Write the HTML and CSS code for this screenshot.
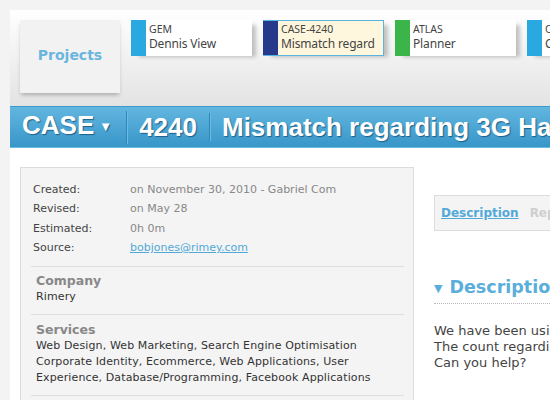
FILE: index.html
```html
<!DOCTYPE html>
<html>
<head>
<meta charset="utf-8">
<link rel="stylesheet" href="styles.css">
</head>
<body>
<div class="page">
  <div class="topbar">
    <div class="projects">Projects</div>
    <div class="tab"><span class="bar b-blue"></span><div class="tab-text"><div class="code">GEM</div><div class="name">Dennis View</div></div></div>
    <div class="tab active"><span class="bar b-navy"></span><div class="tab-text"><div class="code">CASE-4240</div><div class="name">Mismatch regard</div></div></div>
    <div class="tab"><span class="bar b-green"></span><div class="tab-text"><div class="code">ATLAS</div><div class="name">Planner</div></div></div>
    <div class="tab"><span class="bar b-blue"></span><div class="tab-text"><div class="code">CLIENT</div><div class="name">Corporate</div></div></div>
  </div>
  <div class="casebar">
    <span class="seg first">CASE<span class="caret">&#9660;</span></span>
    <span class="seg mid">4240</span>
    <span class="seg last">Mismatch regarding 3G Handsets</span>
  </div>
  <div class="content">
    <div class="details">
      <div class="meta">
        <div class="row"><span class="lbl">Created:</span><span class="val">on November 30, 2010 - Gabriel Com</span></div>
        <div class="row"><span class="lbl">Revised:</span><span class="val">on May 28</span></div>
        <div class="row"><span class="lbl">Estimated:</span><span class="val">0h 0m</span></div>
        <div class="row"><span class="lbl">Source:</span><a class="val link" href="#">bobjones@rimey.com</a></div>
      </div>
      <div class="section first-sec">
        <div class="sec-title">Company</div>
        <div class="sec-body">Rimery</div>
      </div>
      <div class="section">
        <div class="sec-title">Services</div>
        <div class="sec-body">Web Design, Web Marketing, Search Engine Optimisation Corporate Identity, Ecommerce, Web Applications, User Experience, Database/Programming, Facebook Applications</div>
      </div>
    </div>
    <div class="main">
      <div class="tabs2"><a class="t2 on" href="#">Description</a><span class="t2">Replies</span></div>
      <h2 class="desc-h"><span class="tri">&#9660;</span>Description</h2>
      <p class="desc">We have been using the handsets for a while.<br>The count regarding the 3G handsets is wrong.<br>Can you help?</p>
    </div>
  </div>
</div>
</body>
</html>
```
FILE: styles.css
```css
html, body { margin: 0; padding: 0; }
body {
  background: #f3f3f3;
  padding: 10px 0 0 10px;
  width: 540px;
  height: 390px;
  overflow: hidden;
  font-family: "DejaVu Sans", Verdana, sans-serif;
}
.page {
  background: #fff;
  width: 540px;
  height: 390px;
  overflow: hidden;
}
.topbar {
  height: 96px;
  box-sizing: border-box;
  padding: 10px 0 0 10px;
  display: flex;
  align-items: flex-start;
  gap: 11px;
  background: linear-gradient(#ffffff, #e3e3e3);
  white-space: nowrap;
  overflow: hidden;
}
.projects {
  width: 100px;
  height: 73px;
  flex: none;
  box-sizing: border-box;
  padding-bottom: 3px;
  background: #f2f2f2;
  box-shadow: 0 3px 4px -1px rgba(0,0,0,0.25);
  color: #6ab6de;
  font-weight: bold;
  font-size: 14px;
  display: flex;
  align-items: center;
  justify-content: center;
}
.tab {
  width: 121px;
  height: 36px;
  flex: none;
  box-sizing: border-box;
  background: #fff;
  display: flex;
  box-shadow: 6px 3px 4px -2px rgba(0,0,0,0.22);
  overflow: hidden;
}
.tab.active {
  background: #fff7dd;
  border: 1px solid #5ab4e0;
  border-left: none;
}
.bar { width: 15px; flex: none; }
.b-blue { background: #29a9e0; }
.b-navy { background: #263a8c; }
.b-green { background: #3bb54a; }
.tab-text { padding: 2px 0 0 3px; color: #444; font-family: "Noto Sans", "Open Sans", sans-serif; }
.tab.active .tab-text { padding-top: 1px; }
.code { font-size: 10.5px; line-height: 14px; }
.name { font-size: 12px; line-height: 16px; letter-spacing: -0.15px; }
.casebar {
  height: 42px;
  box-sizing: border-box;
  border-top: 1px solid #3d9acb;
  border-bottom: 1px solid #6cbbe2;
  background: linear-gradient(#62b6df, #3896c9);
  display: flex;
  align-items: center;
  font-family: "Liberation Sans", Arial, sans-serif;
  font-weight: bold;
  font-size: 26px;
  color: #fff;
  text-shadow: 1px 1px 1px #1d5f86;
  white-space: nowrap;
  overflow: hidden;
}
.seg {
  padding: 0 12px 0 12px;
  border-right: 1px solid #2f86b8;
  box-shadow: 1px 0 0 #6bbce2;
  line-height: 28px;
}
.seg.first { padding-left: 12px; padding-right: 14px; }
.seg.mid { padding-right: 12px; }
.seg.last { border-right: none; box-shadow: none; padding-left: 12px; }
.caret { font-size: 13px; position: relative; top: -3px; margin-left: 5px; }
.content {
  display: flex;
  padding: 19px 0 0 10px;
  align-items: flex-start;
}
.details {
  width: 394px;
  flex: none;
  box-sizing: border-box;
  background: #f4f4f4;
  border: 1px solid #dcdcdc;
  padding: 12px 9px 0 10px;
  height: 260px;
}
.meta { padding: 0 0 9px 2px; border-bottom: 1px solid #dedede; }
.row { font-size: 11px; line-height: 19.3px; display: flex; color: #444; }
.lbl { width: 97px; flex: none; }
.val { color: #888; white-space: nowrap; }
.link { color: #52a9d8; text-decoration: underline; }
.section { padding: 6px 5px 9px 5px; border-bottom: 1px solid #dedede; letter-spacing: 0.12px; }
.section.first-sec { padding-top: 5px; }
.sec-title { font-weight: bold; color: #888; font-size: 12.5px; line-height: 17px; letter-spacing: 0; }
.sec-body { font-size: 11px; line-height: 16px; color: #333; }
.main { margin-left: 20px; padding-top: 28px; width: 300px; flex: none; }
.tabs2 {
  height: 36px;
  box-sizing: border-box;
  border: 1px solid #dcdcdc;
  background: #f4f4f4;
  display: flex;
  align-items: center;
  padding-left: 6px;
  gap: 11px;
  font-size: 12px;
  font-weight: bold;
  white-space: nowrap;
}
.t2 { color: #cfcfcf; }
.t2.on { color: #52a9d8; text-decoration: underline; }
.desc-h {
  margin: 46px 0 0 0;
  font-size: 17.5px;
  color: #5aaedb;
  font-weight: bold;
  padding-bottom: 3px;
  border-bottom: 1px dotted #b8b8b8;
  line-height: 21px;
  white-space: nowrap;
}
.tri { font-size: 11px; margin-right: 7px; position: relative; top: -1px; }
.desc {
  margin: 19px 0 0 0;
  font-size: 13px;
  line-height: 16px;
  color: #444;
  white-space: nowrap;
}
```
